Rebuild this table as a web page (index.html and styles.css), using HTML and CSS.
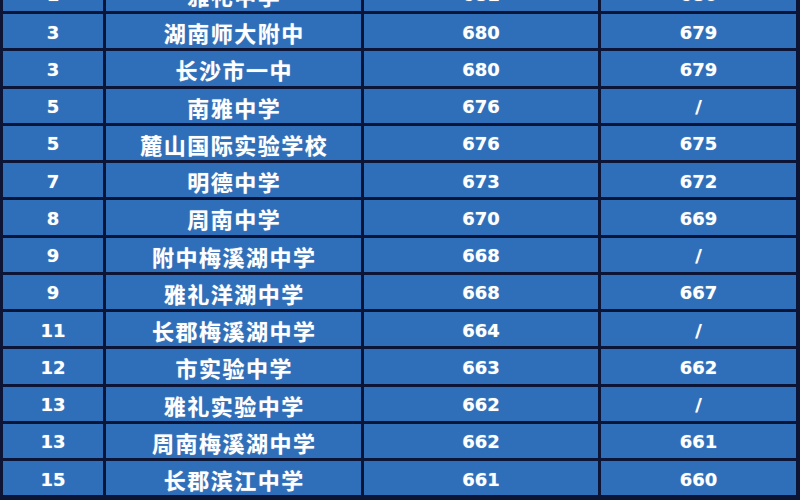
FILE: index.html
```html
<!DOCTYPE html>
<html lang="zh">
<head>
<meta charset="utf-8">
<link rel="stylesheet" href="styles.css">
<title>分数线</title>
</head>
<body>
<div class="viewport">
  <div class="table">
    <div class="c num">1</div><div class="c name">雅礼中学</div><div class="c num">681</div><div class="c num">680</div>
    <div class="c num">3</div><div class="c name">湖南师大附中</div><div class="c num">680</div><div class="c num">679</div>
    <div class="c num">3</div><div class="c name">长沙市一中</div><div class="c num">680</div><div class="c num">679</div>
    <div class="c num">5</div><div class="c name">南雅中学</div><div class="c num">676</div><div class="c num">/</div>
    <div class="c num">5</div><div class="c name">麓山国际实验学校</div><div class="c num">676</div><div class="c num">675</div>
    <div class="c num">7</div><div class="c name">明德中学</div><div class="c num">673</div><div class="c num">672</div>
    <div class="c num">8</div><div class="c name">周南中学</div><div class="c num">670</div><div class="c num">669</div>
    <div class="c num">9</div><div class="c name">附中梅溪湖中学</div><div class="c num">668</div><div class="c num">/</div>
    <div class="c num">9</div><div class="c name">雅礼洋湖中学</div><div class="c num">668</div><div class="c num">667</div>
    <div class="c num">11</div><div class="c name">长郡梅溪湖中学</div><div class="c num">664</div><div class="c num">/</div>
    <div class="c num">12</div><div class="c name">市实验中学</div><div class="c num">663</div><div class="c num">662</div>
    <div class="c num">13</div><div class="c name">雅礼实验中学</div><div class="c num">662</div><div class="c num">/</div>
    <div class="c num">13</div><div class="c name">周南梅溪湖中学</div><div class="c num">662</div><div class="c num">661</div>
    <div class="c num">15</div><div class="c name">长郡滨江中学</div><div class="c num">661</div><div class="c num">660</div>
  </div>
</div>
</body>
</html>
```
FILE: styles.css
```css
html, body {
  margin: 0;
  padding: 0;
  background: #0c1535;
}
.viewport {
  width: 800px;
  height: 500px;
  overflow: hidden;
  background: #0c1535;
}
.table {
  margin-top: -26.25px;
  display: grid;
  grid-template-columns: 100px 255px 234px 195px;
  grid-auto-rows: 34.25px;
  gap: 3px;
  padding: 3px 4px 3px 3px;
  background: #0c1535;
  width: 793px;
}
.c {
  background: #2f6fb9;
  color: #ffffff;
  display: flex;
  align-items: center;
  justify-content: center;
  font-weight: bold;
  padding-top: 2px;
  box-sizing: border-box;
  text-shadow: 0 0 1px rgba(255,255,255,0.5);
}
.num {
  font-family: "DejaVu Sans", "Liberation Sans", sans-serif;
  font-size: 18px;
}
.name {
  font-family: "Noto Sans CJK SC", "Noto Sans", sans-serif;
  font-size: 22px;
  letter-spacing: 1.5px;
  padding-left: 1.5px;
}
```
